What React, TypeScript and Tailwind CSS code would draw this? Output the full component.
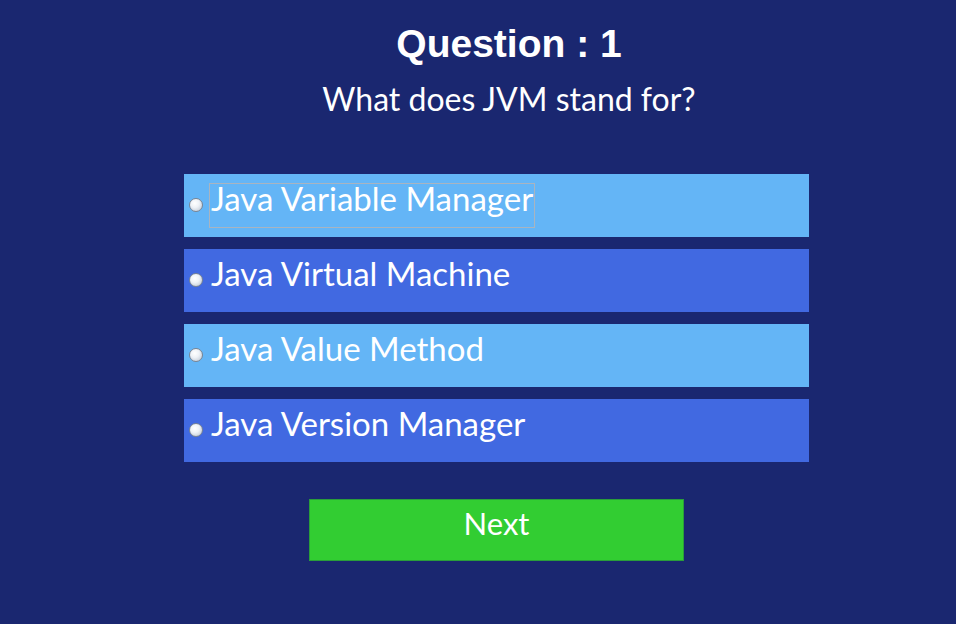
import React from "react";

const options = [
  { label: "Java Variable Manager", light: true, focus: true },
  { label: "Java Virtual Machine", light: false, focus: false },
  { label: "Java Value Method", light: true, focus: false },
  { label: "Java Version Manager", light: false, focus: false },
];

function Radio() {
  return (
    <span className="inline-block w-[14px] h-[14px] shrink-0 rounded-full border border-[#7b8593] bg-[radial-gradient(circle_at_40%_35%,#ffffff_0%,#eef2f7_40%,#b7c1ce_100%)] mt-[24px]" />
  );
}

export default function App() {
  return (
    <div
      className="w-[956px] h-[624px] bg-[#1a2770] text-white overflow-hidden"
      style={{ fontFamily: "Lato, 'Open Sans', sans-serif" }}
    >
      <div className="flex flex-col items-center pl-[62px] pt-[24px]">
        <h1
          className="text-[39px] leading-[39px] font-bold"
          style={{ fontFamily: "'Liberation Sans', Arial, sans-serif" }}
        >
          Question : 1
        </h1>
        <p className="mt-[18px] text-[32px] leading-[36px]">What does JVM stand for?</p>
      </div>
      <div className="ml-[184px] w-[625px] mt-[57px] flex flex-col gap-[12px]">
        {options.map((o) => (
          <div
            key={o.label}
            className={`h-[63px] flex items-start pl-[5px] ${o.light ? "bg-[#64b5f6]" : "bg-[#4169e1]"}`}
          >
            <Radio />
            <span
              className={`ml-[6px] mt-[9px] h-[45px] text-[33px] leading-[28px] pb-[15px] px-px ${o.focus ? "border border-[#a9b4c0]" : "border border-transparent"}`}
            >
              {o.label}
            </span>
          </div>
        ))}
      </div>
      <div className="ml-[309px] mt-[37px] w-[375px] h-[62px] bg-[#32cd32] border border-[#2a9e3a] flex items-center justify-center text-[31px] pb-[13px]">
        Next
      </div>
    </div>
  );
}
